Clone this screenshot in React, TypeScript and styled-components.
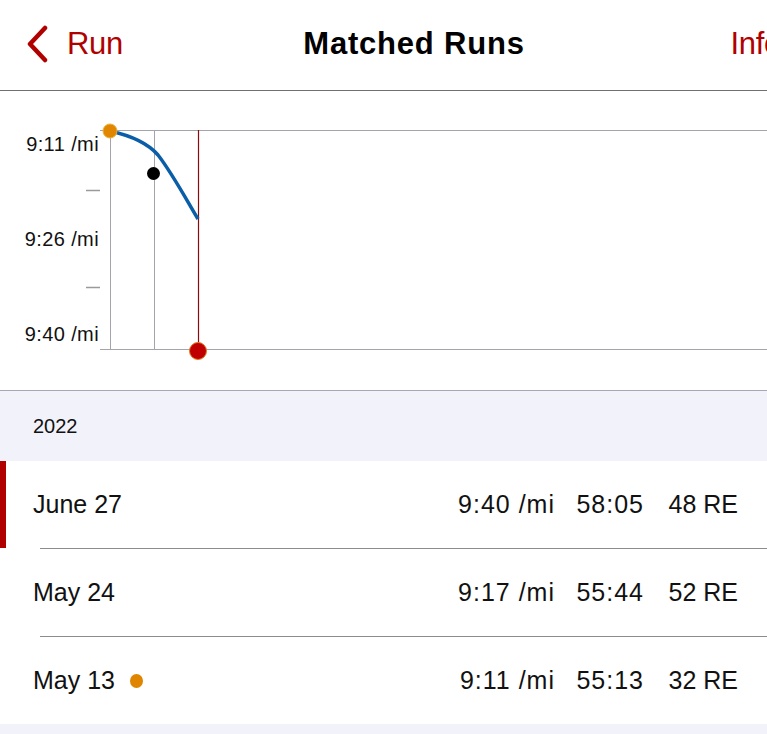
import React, { FC } from 'react';
import styled, { createGlobalStyle } from 'styled-components';

const GlobalStyle = createGlobalStyle`
  html, body {
    margin: 0;
    padding: 0;
    background: #fff;
  }
  body {
    font-family: "Liberation Sans", Arial, sans-serif;
    color: #111;
    overflow: hidden;
  }
`;

const RED = '#b00000';

type Run = {
  date: string;
  pace: string;
  time: string;
  re: string;
  selected?: boolean;
  marker?: boolean;
};

const runs: Run[] = [
  { date: 'June 27', pace: '9:40 /mi', time: '58:05', re: '48 RE', selected: true },
  { date: 'May 24', pace: '9:17 /mi', time: '55:44', re: '52 RE' },
  { date: 'May 13', pace: '9:11 /mi', time: '55:13', re: '32 RE', marker: true },
];

const Chart: FC = () => (
  <ChartSvg width="767" height="299" viewBox="0 0 767 299">
    <line x1="100" y1="39.5" x2="767" y2="39.5" stroke="#a4a4ac" strokeWidth="1" />
    <line x1="100" y1="258.5" x2="767" y2="258.5" stroke="#a4a4ac" strokeWidth="1" />
    <line x1="110.5" y1="39" x2="110.5" y2="258" stroke="#a4a4ac" strokeWidth="1" />
    <line x1="154.5" y1="39" x2="154.5" y2="258" stroke="#a4a4ac" strokeWidth="1" />
    <line x1="198.5" y1="39" x2="198.5" y2="258" stroke="#8e0a0a" strokeWidth="1.2" />
    <line x1="86" y1="99.5" x2="100" y2="99.5" stroke="#9a9a9a" strokeWidth="1.5" />
    <line x1="86" y1="196.5" x2="100" y2="196.5" stroke="#9a9a9a" strokeWidth="1.5" />
    <AxisLabel x="99" y="60">9:11 /mi</AxisLabel>
    <AxisLabel x="99" y="155">9:26 /mi</AxisLabel>
    <AxisLabel x="99" y="250">9:40 /mi</AxisLabel>
    <path
      d="M110,40 C128,44 146,50 158,64 C172,82 186,108 198,128"
      fill="none"
      stroke="#0a5ea8"
      strokeWidth="3.5"
    />
    <circle cx="110" cy="40" r="7" fill="#e08600" stroke="#efb040" strokeWidth="1" />
    <circle cx="153.5" cy="82.5" r="6.5" fill="#000" />
    <circle cx="198" cy="260" r="8.5" fill="#c00000" stroke="#e07a20" strokeWidth="1" />
  </ChartSvg>
);

const App: FC = () => (
  <Page>
    <GlobalStyle />
    <NavBar>
      <NavInner>
        <BackButton>
          <svg width="22" height="38" viewBox="0 0 22 38">
            <polyline
              points="18,3 3,19 18,35"
              fill="none"
              stroke={RED}
              strokeWidth="4.5"
              strokeLinecap="round"
              strokeLinejoin="round"
            />
          </svg>
          <NavLink>Run</NavLink>
        </BackButton>
        <Title>Matched Runs</Title>
        <NavRight>
          <NavLink>Info</NavLink>
        </NavRight>
      </NavInner>
    </NavBar>
    <ChartArea>
      <Chart />
    </ChartArea>
    <SectionHeader>2022</SectionHeader>
    <List>
      {runs.map((r, i) => (
        <RowWrap key={r.date} $last={i === runs.length - 1}>
          <Row $selected={r.selected}>
            <DateCell>
              {r.date}
              {r.marker && <Dot />}
            </DateCell>
            <Values>
              <PaceCell>{r.pace}</PaceCell>
              <TimeCell>{r.time}</TimeCell>
              <ReCell>{r.re}</ReCell>
            </Values>
          </Row>
        </RowWrap>
      ))}
    </List>
    <Footer />
  </Page>
);
export default App;

const Page = styled.div`
  width: 767px;
  height: 734px;
  overflow: hidden;
  display: flex;
  flex-direction: column;
  background: #fff;
`;

const NavBar = styled.header`
  height: 90px;
  border-bottom: 1px solid #707070;
  overflow: hidden;
  flex-shrink: 0;
`;

const NavInner = styled.div`
  width: 828px;
  height: 100%;
  display: grid;
  grid-template-columns: 1fr auto 1fr;
  align-items: center;
`;

const BackButton = styled.div`
  display: flex;
  align-items: center;
  gap: 18px;
  padding-left: 27px;
  padding-bottom: 2px;
`;

const NavLink = styled.span`
  font-size: 31px;
  color: ${RED};
  letter-spacing: -0.3px;
`;

const Title = styled.h1`
  margin: 0;
  font-size: 31px;
  font-weight: 700;
  letter-spacing: 0.8px;
  color: #000;
  padding-bottom: 2px;
`;

const NavRight = styled.div`
  display: flex;
  justify-content: flex-end;
  padding-right: 47px;
  padding-bottom: 2px;
`;

const ChartArea = styled.section`
  height: 299px;
  border-bottom: 1px solid #a8a8b4;
  flex-shrink: 0;
`;

const ChartSvg = styled.svg`
  display: block;
`;

const AxisLabel = styled.text`
  font-family: "Liberation Sans", Arial, sans-serif;
  font-size: 20px;
  letter-spacing: 0.4px;
  fill: #111;
  text-anchor: end;
`;

const SectionHeader = styled.div`
  height: 70px;
  background: #f2f3fa;
  display: flex;
  align-items: center;
  padding-left: 33px;
  font-size: 20px;
  color: #111;
  flex-shrink: 0;
`;

const List = styled.div`
  display: flex;
  flex-direction: column;
  background: #fff;
`;

const RowWrap = styled.div<{ $last?: boolean }>`
  &::after {
    content: '';
    display: ${p => (p.$last ? 'none' : 'block')};
    margin-left: 40px;
    height: 1px;
    background: #8c8c8c;
  }
`;

const Row = styled.div<{ $selected?: boolean }>`
  height: 87px;
  display: flex;
  align-items: center;
  justify-content: space-between;
  padding: 0 29px 0 33px;
  font-size: 25px;
  color: #111;
  box-shadow: ${p => (p.$selected ? `inset 6px 0 0 ${RED}` : 'none')};
`;

const DateCell = styled.div`
  display: flex;
  align-items: center;
  gap: 15px;
`;

const Dot = styled.span`
  width: 13px;
  height: 14px;
  border-radius: 50%;
  background: #df8500;
`;

const Values = styled.div`
  display: flex;
  align-items: center;
`;

const PaceCell = styled.span`
  width: 140px;
  text-align: right;
  letter-spacing: 1px;
  margin-right: -1px;
`;

const TimeCell = styled.span`
  width: 90px;
  text-align: right;
  letter-spacing: 1px;
  margin-right: -1px;
`;

const ReCell = styled.span`
  width: 95px;
  text-align: right;
`;

const Footer = styled.div`
  flex: 1;
  background: #f2f3fa;
`;
